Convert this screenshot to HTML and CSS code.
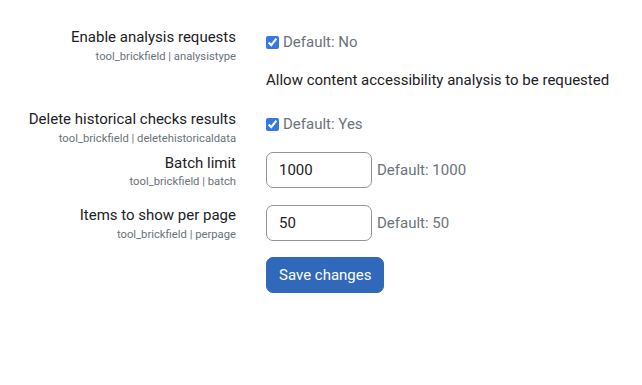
FILE: index.html
```html
<!DOCTYPE html>
<html lang="en">
<head>
    <meta charset="UTF-8">
    <meta name="viewport" content="width=device-width, initial-scale=1.0">
    <title>Brickfield settings</title>
    <link rel="stylesheet" href="styles.css">
</head>
<body>
    <form class="settings">
        <div class="setting setting-first">
            <div class="setting-label">
                <label for="analysistype">Enable analysis requests</label>
                <span class="setting-name">tool_brickfield | analysistype</span>
            </div>
            <div class="setting-control setting-check">
                <div class="check-line">
                    <input type="checkbox" id="analysistype" checked>
                    <span class="default">Default: No</span>
                </div>
                <p class="description">Allow content accessibility analysis to be requested</p>
            </div>
        </div>

        <div class="setting setting-second">
            <div class="setting-label">
                <label for="deletehistoricaldata">Delete historical checks results</label>
                <span class="setting-name">tool_brickfield | deletehistoricaldata</span>
            </div>
            <div class="setting-control setting-check">
                <div class="check-line">
                    <input type="checkbox" id="deletehistoricaldata" checked>
                    <span class="default">Default: Yes</span>
                </div>
            </div>
        </div>

        <div class="setting">
            <div class="setting-label">
                <label for="batch">Batch limit</label>
                <span class="setting-name">tool_brickfield | batch</span>
            </div>
            <div class="setting-control text-line">
                <input type="text" id="batch" class="text-input" value="1000">
                <span class="default">Default: 1000</span>
            </div>
        </div>

        <div class="setting">
            <div class="setting-label">
                <label for="perpage">Items to show per page</label>
                <span class="setting-name">tool_brickfield | perpage</span>
            </div>
            <div class="setting-control text-line">
                <input type="text" id="perpage" class="text-input" value="50">
                <span class="default">Default: 50</span>
            </div>
        </div>

        <div class="setting">
            <div></div>
            <div class="setting-control">
                <button type="submit" class="btn-save">Save changes</button>
            </div>
        </div>
    </form>
</body>
</html>
```

FILE: styles.css
```css
body {
    margin: 0;
    font-family: 'Roboto', 'Liberation Sans', sans-serif;
    font-size: 15px;
    line-height: 1.5;
    color: #1d2125;
    background-color: #fff;
}

.settings {
    padding: 26px 8px 0 8px;
}

.setting {
    display: grid;
    grid-template-columns: 228px 1fr;
    column-gap: 30px;
    margin-bottom: 15px;
}

.setting-first {
    margin-bottom: 17px;
}

.setting-second {
    margin-bottom: 6px;
}

.setting-label {
    display: flex;
    flex-direction: column;
    align-items: flex-end;
    text-align: right;
}

.setting-name {
    font-size: 11.25px;
    line-height: 15px;
    color: #6a737b;
}

.setting-check {
    padding-top: 5px;
}

.check-line {
    display: flex;
    align-items: center;
}

.check-line input {
    width: 13px;
    height: 13px;
    margin: 0 4px 0 0;
    accent-color: #3478e5;
}

.default {
    color: #6a737b;
}

.description {
    margin: 15px 0 0 0;
}

.text-line {
    display: flex;
    align-items: center;
    gap: 5px;
}

.text-input {
    box-sizing: border-box;
    width: 106px;
    height: 36px;
    padding: 6px 12px;
    border: 1px solid #8f959e;
    border-radius: 7px;
    font-family: inherit;
    font-size: 15px;
    color: #1d2125;
}

.btn-save {
    height: 36px;
    padding: 6px 12px;
    border: 1px solid #3068ba;
    border-radius: 7px;
    background-color: #3068ba;
    color: #fff;
    font-family: inherit;
    font-size: 15px;
}
```
